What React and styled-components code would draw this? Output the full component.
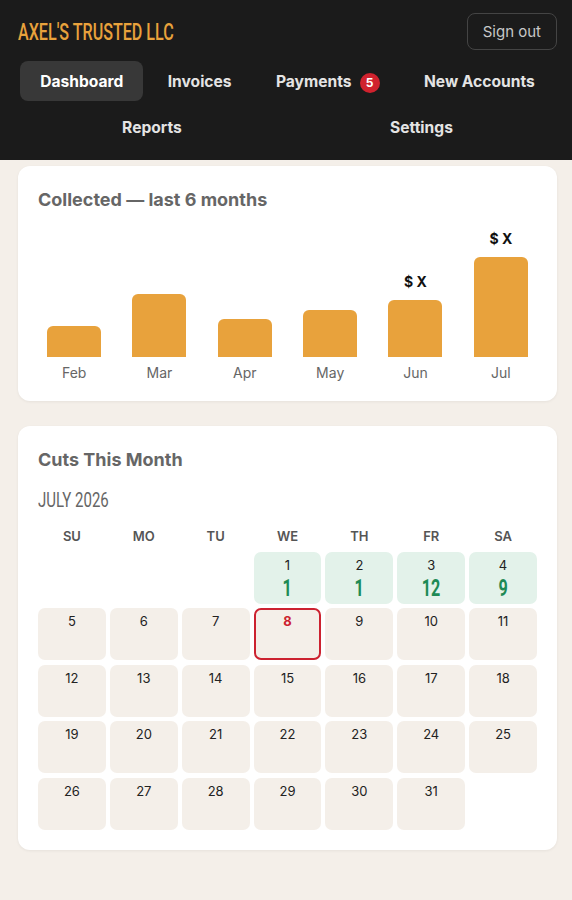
import React from 'react'
import styled, { createGlobalStyle, css } from 'styled-components'

const GlobalStyle = createGlobalStyle`
  body {
    margin: 0;
    background: #f4efe9;
    font-family: Inter, "Noto Sans", sans-serif;
  }
`

// no condensed face installed, so squeeze Roboto horizontally
const condensed = (scale, origin = 'center') => css`
  font-family: Roboto, "Liberation Sans", sans-serif;
  display: inline-block;
  transform: scaleX(${scale});
  transform-origin: ${origin};
`

const Header = styled.header`
  background: #1b1b1b;
  padding: 13px 15px 13px 18px;
`

const TopRow = styled.div`
  display: flex;
  justify-content: space-between;
  align-items: center;
`

const Brand = styled.div`
  ${condensed(0.7, 'left center')};
  color: #e8a23c;
  font-size: 23px;
  font-weight: 500;
  padding-top: 2px;
`

const SignOut = styled.button`
  background: transparent;
  border: 1px solid #444;
  border-radius: 8px;
  color: #c8c8c8;
  font-family: Inter, sans-serif;
  font-size: 15px;
  height: 37px;
  padding: 0 15px;
`

const Nav = styled.nav`
  display: flex;
  flex-wrap: wrap;
  justify-content: space-around;
  row-gap: 6px;
  margin-top: 11px;
`

const NavItem = styled.a`
  display: flex;
  align-items: center;
  gap: 8px;
  height: 40px;
  padding: 0 20px;
  border-radius: 8px;
  background: ${p => (p.$active ? '#383838' : 'transparent')};
  color: ${p => (p.$active ? '#fff' : '#e4e4e4')};
  font-size: 15.6px;
  font-weight: 700;
  text-decoration: none;
`

const Badge = styled.span`
  display: inline-flex;
  align-items: center;
  justify-content: center;
  width: 20px;
  height: 20px;
  border-radius: 50%;
  background: #d0222e;
  color: #fff;
  font-size: 12px;
  font-weight: 700;
  margin-top: 3px;
`

const Main = styled.main`
  padding: 6px 15px 50px 18px;
  display: flex;
  flex-direction: column;
  gap: 25px;
`

const Card = styled.section`
  background: #fff;
  border-radius: 12px;
  box-shadow: 0 1px 3px rgba(0, 0, 0, 0.06);
  padding: 23px 20px 20px;
`

const CardTitle = styled.h2`
  margin: 0;
  font-size: 18px;
  line-height: 22px;
  font-weight: 700;
  color: #666;
`

const Chart = styled.div`
  display: grid;
  grid-template-columns: repeat(6, 1fr);
  column-gap: 13px;
  margin-top: 9px;
`

const BarCol = styled.div`
  display: flex;
  flex-direction: column;
  align-items: center;
  justify-content: flex-end;
  height: 137px;
`

const BarValue = styled.div`
  font-size: 14px;
  font-weight: 700;
  color: #111;
  margin-bottom: 10px;
`

const Bar = styled.div`
  width: 54px;
  background: #e8a23c;
  border-radius: 6px 6px 0 0;
`

const Month = styled.div`
  text-align: center;
  font-size: 14px;
  color: #666;
  margin-top: 7px;
`

const MonthLabel = styled.div`
  ${condensed(0.75, 'left center')};
  font-size: 20px;
  color: #666;
  margin-top: 17px;
`

const Calendar = styled.div`
  display: grid;
  grid-template-columns: repeat(7, 1fr);
  column-gap: 4px;
  row-gap: 4.5px;
  margin-top: 16px;
`

const WeekDay = styled.div`
  text-align: center;
  font-size: 13px;
  font-weight: 600;
  color: #555;
  padding-bottom: 3px;
`

const Day = styled.div`
  height: 52px;
  box-sizing: border-box;
  border-radius: 7px;
  display: flex;
  flex-direction: column;
  align-items: center;
  background: ${p => (p.$empty ? 'transparent' : p.$cuts ? '#e3f2ea' : '#f4efe9')};
  border: ${p => (p.$today ? '2px solid #cc2230' : 'none')};
  padding-top: ${p => (p.$today ? '3px' : '5px')};
`

const DayNum = styled.span`
  font-size: 13px;
  line-height: 16px;
  color: ${p => (p.$today ? '#cc2230' : '#222')};
  font-weight: ${p => (p.$today ? 700 : 400)};
`

const Cuts = styled.span`
  ${condensed(0.66)};
  font-size: 24.5px;
  line-height: 29px;
  font-weight: 700;
  color: #1e8a55;
`

const bars = [
  { m: 'Feb', h: 31 },
  { m: 'Mar', h: 63 },
  { m: 'Apr', h: 38 },
  { m: 'May', h: 47 },
  { m: 'Jun', h: 57, v: '$ X' },
  { m: 'Jul', h: 100, v: '$ X' },
]

const cuts = { 1: 1, 2: 1, 3: 12, 4: 9 }
const TODAY = 8

const App = () => {
  const days = []
  for (let i = 0; i < 3; i++) days.push(null)
  for (let d = 1; d <= 31; d++) days.push(d)

  return (
    <>
      <GlobalStyle />
      <Header>
        <TopRow>
          <Brand>AXEL'S TRUSTED LLC</Brand>
          <SignOut>Sign out</SignOut>
        </TopRow>
        <Nav>
          <NavItem $active>Dashboard</NavItem>
          <NavItem>Invoices</NavItem>
          <NavItem>
            Payments <Badge>5</Badge>
          </NavItem>
          <NavItem>New Accounts</NavItem>
          <NavItem>Reports</NavItem>
          <NavItem>Settings</NavItem>
        </Nav>
      </Header>

      <Main>
        <Card>
          <CardTitle>Collected — last 6 months</CardTitle>
          <Chart>
            {bars.map(b => (
              <div key={b.m}>
                <BarCol>
                  {b.v && <BarValue>{b.v}</BarValue>}
                  <Bar style={{ height: b.h }} />
                </BarCol>
                <Month>{b.m}</Month>
              </div>
            ))}
          </Chart>
        </Card>

        <Card>
          <CardTitle>Cuts This Month</CardTitle>
          <div>
            <MonthLabel>JULY 2026</MonthLabel>
          </div>
          <Calendar>
            {['SU', 'MO', 'TU', 'WE', 'TH', 'FR', 'SA'].map(w => (
              <WeekDay key={w}>{w}</WeekDay>
            ))}
            {days.map((d, i) =>
              d === null ? (
                <Day key={'e' + i} $empty />
              ) : (
                <Day key={d} $cuts={cuts[d]} $today={d === TODAY}>
                  <DayNum $today={d === TODAY}>{d}</DayNum>
                  {cuts[d] && <Cuts>{cuts[d]}</Cuts>}
                </Day>
              )
            )}
          </Calendar>
        </Card>
      </Main>
    </>
  )
}

export default App
